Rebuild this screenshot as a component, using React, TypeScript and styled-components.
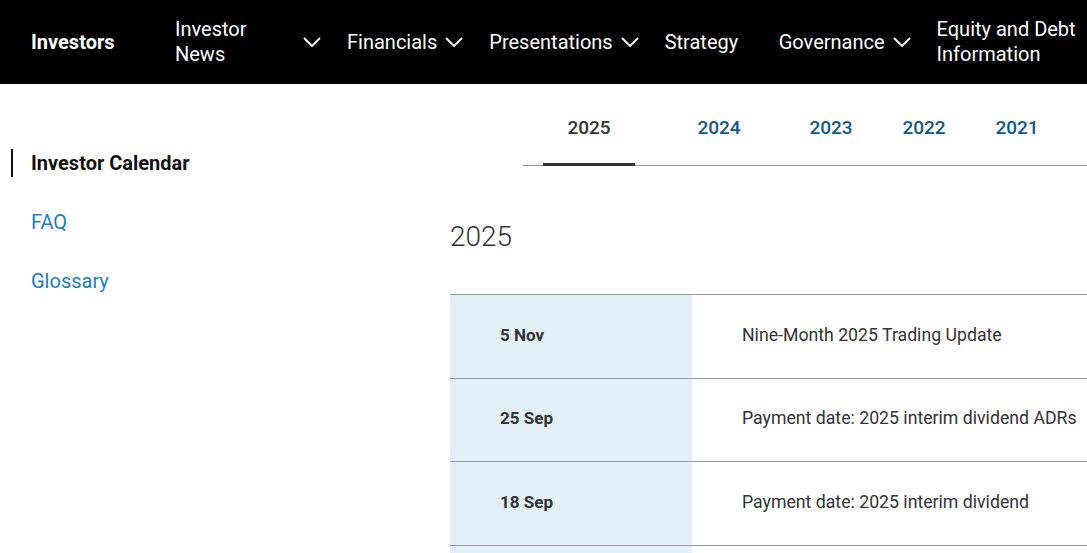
import React from 'react';
import styled, { createGlobalStyle } from 'styled-components';

const GlobalStyle = createGlobalStyle`
  body {
    margin: 0;
    font-family: Roboto, "Open Sans", "Liberation Sans", sans-serif;
    background: #fff;
    color: #222;
  }
`;

const TopBar = styled.header`
  height: 84px;
  background: #000;
  display: flex;
  align-items: center;
  padding-left: 31px;
  color: #fff;
  font-size: 20px;
  overflow: hidden;
`;

const Brand = styled.div`
  font-weight: 700;
  width: 144px;
  flex-shrink: 0;
`;

const NavItem = styled.div<{ $width?: number }>`
  display: flex;
  align-items: center;
  justify-content: space-between;
  gap: 8px;
  margin-right: 26px;
  flex-shrink: 0;
  line-height: 25px;
  width: ${(p) => (p.$width ? `${p.$width}px` : 'auto')};
`;

const NavLabel = styled.span<{ $wrap?: number }>`
  white-space: ${(p) => (p.$wrap ? 'normal' : 'nowrap')};
  width: ${(p) => (p.$wrap ? `${p.$wrap}px` : 'auto')};
`;

const Chevron = () => (
  <svg width="18" height="10" viewBox="0 0 18 10" fill="none">
    <path d="M1 1l8 8 8-8" stroke="#fff" strokeWidth="1.8" />
  </svg>
);

const Page = styled.div`
  display: flex;
`;

const Sidebar = styled.nav`
  width: 450px;
  flex-shrink: 0;
  padding-top: 65px;
  display: flex;
  flex-direction: column;
`;

const SideLink = styled.a<{ $active?: boolean }>`
  display: block;
  font-size: 20px;
  line-height: 28px;
  height: 28px;
  margin: 0 0 31px 11px;
  padding-left: 18px;
  color: ${(p) => (p.$active ? '#111' : '#1a7fc1')};
  font-weight: ${(p) => (p.$active ? 700 : 400)};
  text-decoration: none;
  border-left: 2px solid ${(p) => (p.$active ? '#111' : 'transparent')};
`;

const Main = styled.main`
  flex: 1;
  min-width: 0;
`;

const Tabs = styled.div`
  margin-left: 73px;
  height: 81px;
  border-bottom: 1px solid #999;
  display: flex;
  align-items: flex-end;
`;

const Tab = styled.div<{ $active?: boolean; $offset: number }>`
  width: 92px;
  margin-left: ${(p) => p.$offset}px;
  text-align: center;
  font-size: 19px;
  font-weight: 500;
  color: ${(p) => (p.$active ? '#333' : '#11578b')};
  padding-bottom: 24px;
  border-bottom: 3px solid ${(p) => (p.$active ? '#333' : 'transparent')};
  margin-bottom: -1px;
`;

const Heading = styled.h2`
  margin: 0;
  padding-top: 54px;
  height: 74px;
  font-size: 28px;
  font-weight: 300;
  color: #333;
  line-height: 34px;
  box-sizing: content-box;
`;

const Table = styled.div`
  border-top: 1px solid #999;
`;

const Row = styled.div`
  display: grid;
  grid-template-columns: 242px 1fr;
  height: 83.5px;
  box-sizing: border-box;
  border-bottom: 1px solid #999;
`;

const DateCell = styled.div`
  background: #e3f0f8;
  padding: 0 0 3px 50px;
  display: flex;
  align-items: center;
  font-size: 17px;
  font-weight: 700;
  color: #333;
`;

const TextCell = styled.div`
  padding: 0 0 3px 50px;
  display: flex;
  align-items: center;
  font-size: 17.7px;
  color: #333;
  white-space: nowrap;
`;

const events = [
  { date: '5 Nov', title: 'Nine-Month 2025 Trading Update' },
  { date: '25 Sep', title: 'Payment date: 2025 interim dividend ADRs' },
  { date: '18 Sep', title: 'Payment date: 2025 interim dividend' },
  { date: '12 Aug', title: 'Ex-dividend date: 2025 interim dividend' },
];

const years = [
  { year: '2025', offset: 20 },
  { year: '2024', offset: 38 },
  { year: '2023', offset: 20 },
  { year: '2022', offset: 1 },
  { year: '2021', offset: 1 },
];

const App: React.FC = () => (
  <>
    <GlobalStyle />
    <TopBar>
      <Brand>Investors</Brand>
      <NavItem $width={146}>
        <NavLabel $wrap={90}>Investor News</NavLabel>
        <Chevron />
      </NavItem>
      <NavItem>
        <NavLabel>Financials</NavLabel>
        <Chevron />
      </NavItem>
      <NavItem>
        <NavLabel>Presentations</NavLabel>
        <Chevron />
      </NavItem>
      <NavItem $width={88}>
        <NavLabel>Strategy</NavLabel>
      </NavItem>
      <NavItem>
        <NavLabel>Governance</NavLabel>
        <Chevron />
      </NavItem>
      <NavItem>
        <NavLabel $wrap={150}>Equity and Debt Information</NavLabel>
      </NavItem>
    </TopBar>
    <Page>
      <Sidebar>
        <SideLink $active>Investor Calendar</SideLink>
        <SideLink>FAQ</SideLink>
        <SideLink>Glossary</SideLink>
      </Sidebar>
      <Main>
        <Tabs>
          {years.map((y, i) => (
            <Tab key={y.year} $active={i === 0} $offset={y.offset}>
              {y.year}
            </Tab>
          ))}
        </Tabs>
        <Heading>2025</Heading>
        <Table>
          {events.map((e) => (
            <Row key={e.date}>
              <DateCell>{e.date}</DateCell>
              <TextCell>{e.title}</TextCell>
            </Row>
          ))}
        </Table>
      </Main>
    </Page>
  </>
);

export default App;
